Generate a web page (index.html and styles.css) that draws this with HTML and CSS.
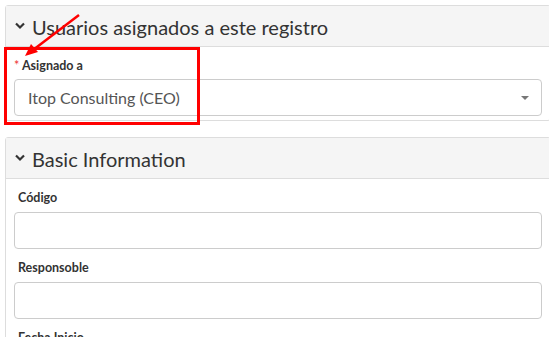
FILE: index.html
```html
<!DOCTYPE html>
<html lang="es">
<head>
  <meta charset="UTF-8">
  <title>Registro</title>
  <link rel="stylesheet" href="styles.css">
</head>
<body>
  <div class="panel">
    <div class="panel-head">
      <svg class="chev" viewBox="0 0 10 8" width="10" height="8"><path d="M1 1.5 L5 5.5 L9 1.5" fill="none" stroke="#333" stroke-width="2.2"/></svg>
      <span>Usuarios asignados a este registro</span>
    </div>
    <div class="panel-body first">
      <label class="lbl"><span class="req">*</span> Asignado a</label>
      <div class="select">
        <span>Itop Consulting (CEO)</span>
        <span class="caret"></span>
      </div>
    </div>
    <div class="mark"></div>
    <svg class="arrow" width="90" height="70" viewBox="0 0 90 70">
      <line x1="78" y1="14" x2="32" y2="49" stroke="#f00" stroke-width="2.5"/>
      <polygon points="24,55 30,43 37,51" fill="#f00"/>
    </svg>
  </div>

  <div class="panel">
    <div class="panel-head">
      <svg class="chev" viewBox="0 0 10 8" width="10" height="8"><path d="M1 1.5 L5 5.5 L9 1.5" fill="none" stroke="#333" stroke-width="2.2"/></svg>
      <span>Basic Information</span>
    </div>
    <div class="panel-body">
      <label class="lbl">Código</label>
      <div class="input"></div>
      <label class="lbl">Responsoble</label>
      <div class="input"></div>
      <label class="lbl">Fecha Inicio</label>
      <div class="input"></div>
    </div>
  </div>
</body>
</html>
```
FILE: styles.css
```css
body {
  font-family: 'Lato', 'Open Sans', sans-serif;
  color: #333;
  margin: 0;
  padding: 5px 0 0 5px;
  background: #fff;
  overflow: hidden;
}
.panel {
  position: relative;
  border: 1px solid #ddd;
  border-radius: 3px;
  margin-right: -2px;
  margin-bottom: 16px;
}
.panel-head {
  background: #f5f5f5;
  border-bottom: 1px solid #ddd;
  box-sizing: border-box;
  height: 41px;
  display: flex;
  align-items: center;
  padding: 2px 0 0 9px;
  font-size: 20px;
  color: #333;
}
.chev {
  margin-right: 7px;
  margin-top: -2px;
}
.panel-body {
  padding: 9px 8px 4px 8px;
}
.lbl {
  display: block;
  font-size: 12.5px;
  font-weight: bold;
  padding-left: 4px;
  line-height: 20px;
  margin-bottom: 4px;
}
.panel-body.first .lbl {
  padding-left: 0;
  margin-bottom: 3px;
}
.req {
  color: #e33;
  font-weight: normal;
}
.select, .input {
  height: 37px;
  border: 1px solid #ccc;
  border-radius: 4px;
  box-sizing: border-box;
}
.select {
  display: flex;
  align-items: center;
  justify-content: space-between;
  padding: 0 12px 0 13px;
  font-size: 16px;
  color: #555;
}
.input {
  margin-bottom: 9px;
}
.caret {
  width: 0;
  height: 0;
  border-left: 4px solid transparent;
  border-right: 4px solid transparent;
  border-top: 4px solid #777;
}
.mark {
  position: absolute;
  left: -2px;
  top: 41px;
  width: 190px;
  height: 72px;
  border: 3px solid #f00;
}
.arrow {
  position: absolute;
  left: -5px;
  top: -5px;
}
```
